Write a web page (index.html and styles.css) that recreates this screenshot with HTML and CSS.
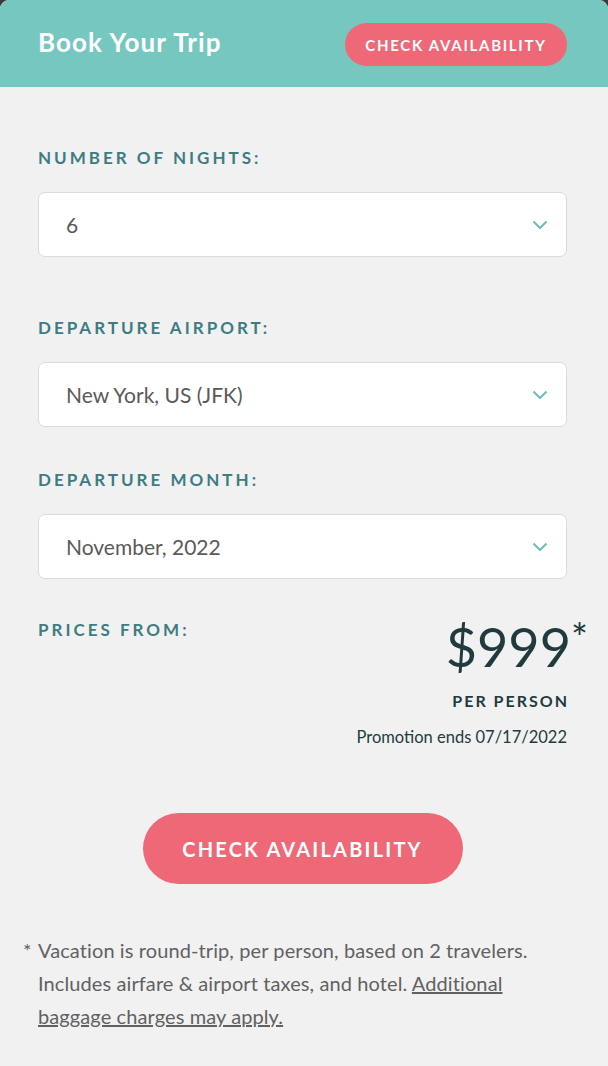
FILE: index.html
```html
<!DOCTYPE html>
<html lang="en">
<head>
<meta charset="utf-8">
<title>Book Your Trip</title>
<link rel="stylesheet" href="styles.css">
</head>
<body>
<div class="card">
  <header class="head">
    <h1 class="title">Book Your Trip</h1>
    <button class="btn btn-small">CHECK AVAILABILITY</button>
  </header>
  <main class="body">
    <div class="field field-first">
      <div class="label">NUMBER OF NIGHTS:</div>
      <div class="select"><span>6</span>
        <svg class="chev" width="16" height="10" viewBox="0 0 16 10"><path d="M1.5 1.5 L8 8 L14.5 1.5" fill="none" stroke="#6cbdb5" stroke-width="2"/></svg>
      </div>
    </div>
    <div class="field field-second">
      <div class="label">DEPARTURE AIRPORT:</div>
      <div class="select"><span>New York, US (JFK)</span>
        <svg class="chev" width="16" height="10" viewBox="0 0 16 10"><path d="M1.5 1.5 L8 8 L14.5 1.5" fill="none" stroke="#6cbdb5" stroke-width="2"/></svg>
      </div>
    </div>
    <div class="field field-third">
      <div class="label">DEPARTURE MONTH:</div>
      <div class="select"><span>November, 2022</span>
        <svg class="chev" width="16" height="10" viewBox="0 0 16 10"><path d="M1.5 1.5 L8 8 L14.5 1.5" fill="none" stroke="#6cbdb5" stroke-width="2"/></svg>
      </div>
    </div>
    <div class="prices">
      <div class="label">PRICES FROM:</div>
      <div class="price-col">
        <div class="price">$999<span class="star">*</span></div>
        <div class="per">PER PERSON</div>
        <div class="promo">Promotion ends 07/17/2022</div>
      </div>
    </div>
    <div class="cta-row">
      <button class="btn btn-large">CHECK AVAILABILITY</button>
    </div>
    <p class="note"><span class="ast">*</span>Vacation is round-trip, per person, based on 2 travelers. Includes airfare &amp; airport taxes, and hotel. <a href="#">Additional baggage charges may apply.</a></p>
  </main>
</div>
</body>
</html>
```
FILE: styles.css
```css
html { background: #3a3a3a; }
body {
  margin: 0;
  font-family: Lato, "Open Sans", Arial, sans-serif;
}
.card {
  background: #f1f1f1;
  border-radius: 9px 9px 0 0;
  overflow: hidden;
  min-height: 1066px;
}
.head {
  background: #76c7c0;
  height: 87px;
  display: flex;
  align-items: center;
  justify-content: space-between;
  padding: 0 41px 0 38px;
  box-sizing: border-box;
}
.title {
  margin: -3px 0 0;
  color: #fff;
  font-size: 26px;
  font-weight: 700;
  letter-spacing: 1.1px;
}
.btn {
  background: #ee6877;
  color: #fff;
  border: 0;
  font-family: inherit;
  font-weight: 700;
  border-radius: 999px;
  cursor: pointer;
  padding: 0;
}
.btn-small {
  width: 222px;
  height: 43px;
  font-size: 15px;
  letter-spacing: 1.7px;
  margin-top: 2px;
}
.body {
  padding: 0 41px 0 38px;
}
.field { display: flex; flex-direction: column; }
.field-first { padding-top: 60px; }
.field-second { padding-top: 60px; }
.field-third { padding-top: 42px; }
.label {
  color: #3e7c81;
  font-size: 17px;
  font-weight: 700;
  letter-spacing: 3px;
  line-height: 22px;
  white-space: nowrap;
}
.select {
  margin-top: 23px;
  height: 65px;
  box-sizing: border-box;
  background: #fff;
  border: 1px solid #d5dddd;
  border-radius: 7px;
  display: flex;
  align-items: center;
  justify-content: space-between;
  padding: 0 18px 0 27px;
  font-size: 21px;
  color: #5a5a5a;
}
.chev { display: block; }
.prices {
  display: flex;
  justify-content: space-between;
  align-items: flex-start;
  padding-top: 42px;
}
.prices .label { margin-top: -2px; }
.price-col {
  display: flex;
  flex-direction: column;
  align-items: flex-end;
}
.price {
  color: #1f3b3e;
  font-size: 54px;
  line-height: 54px;
  font-weight: 400;
  margin-top: -10px;
  margin-right: -21px;
}
.star {
  font-size: 40px;
  vertical-align: 14px;
}
.per {
  margin-top: 17px;
  color: #1f3b3e;
  font-size: 16px;
  font-weight: 700;
  letter-spacing: 2px;
  margin-right: -2px;
}
.promo {
  margin-top: 17px;
  color: #1f3b3e;
  font-size: 16.5px;
}
.cta-row {
  display: flex;
  justify-content: center;
  padding-top: 66px;
}
.btn-large {
  width: 320px;
  height: 71px;
  font-size: 20px;
  letter-spacing: 2.2px;
}
.note {
  position: relative;
  margin: 50px 0 0;
  color: #616161;
  font-size: 20px;
  letter-spacing: 0.1px;
  line-height: 33px;
}
.ast {
  position: absolute;
  left: -15px;
  top: 0;
}
.note a { color: #616161; text-decoration: underline; }
```
